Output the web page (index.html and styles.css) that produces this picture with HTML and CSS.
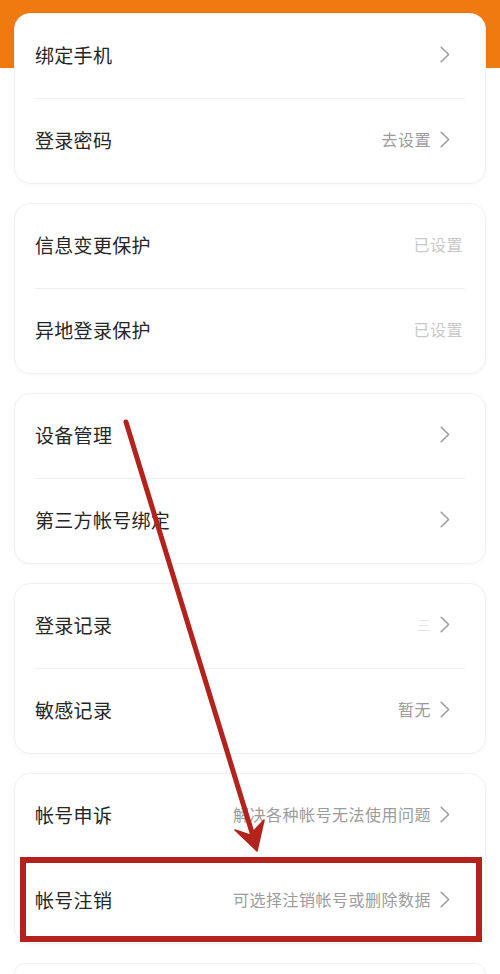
FILE: index.html
```html
<!DOCTYPE html>
<html lang="zh-CN">
<head>
<meta charset="utf-8">
<title>帐号与安全</title>
<link rel="stylesheet" href="styles.css">
</head>
<body>
<div class="page">
  <div class="list">
    <section class="card">
      <div class="row"><span class="label">绑定手机</span><span class="right"><svg class="chev" viewBox="0 0 10 17"><path d="M1.2 1.2 L8.6 8.5 L1.2 15.8"/></svg></span></div>
      <div class="sep"></div>
      <div class="row"><span class="label">登录密码</span><span class="right"><span class="value">去设置</span><svg class="chev" viewBox="0 0 10 17"><path d="M1.2 1.2 L8.6 8.5 L1.2 15.8"/></svg></span></div>
    </section>
    <section class="card">
      <div class="row nochev"><span class="label">信息变更保护</span><span class="right"><span class="value light">已设置</span></span></div>
      <div class="sep"></div>
      <div class="row nochev"><span class="label">异地登录保护</span><span class="right"><span class="value light">已设置</span></span></div>
    </section>
    <section class="card">
      <div class="row"><span class="label">设备管理</span><span class="right"><svg class="chev" viewBox="0 0 10 17"><path d="M1.2 1.2 L8.6 8.5 L1.2 15.8"/></svg></span></div>
      <div class="sep"></div>
      <div class="row"><span class="label">第三方帐号绑定</span><span class="right"><svg class="chev" viewBox="0 0 10 17"><path d="M1.2 1.2 L8.6 8.5 L1.2 15.8"/></svg></span></div>
    </section>
    <section class="card">
      <div class="row"><span class="label">登录记录</span><span class="right"><span class="value faint">三</span><svg class="chev" viewBox="0 0 10 17"><path d="M1.2 1.2 L8.6 8.5 L1.2 15.8"/></svg></span></div>
      <div class="sep"></div>
      <div class="row"><span class="label">敏感记录</span><span class="right"><span class="value">暂无</span><svg class="chev" viewBox="0 0 10 17"><path d="M1.2 1.2 L8.6 8.5 L1.2 15.8"/></svg></span></div>
    </section>
    <section class="card">
      <div class="row"><span class="label">帐号申诉</span><span class="right"><span class="value">解决各种帐号无法使用问题</span><svg class="chev" viewBox="0 0 10 17"><path d="M1.2 1.2 L8.6 8.5 L1.2 15.8"/></svg></span></div>
      <div class="sep"></div>
      <div class="row"><span class="label">帐号注销</span><span class="right"><span class="value">可选择注销帐号或删除数据</span><svg class="chev" viewBox="0 0 10 17"><path d="M1.2 1.2 L8.6 8.5 L1.2 15.8"/></svg></span></div>
    </section>
    <section class="card last">
      <div class="row"></div>
    </section>
  </div>
  <svg class="annot" viewBox="0 0 500 974" width="500" height="974">
    <line x1="126" y1="422" x2="253" y2="836" class="arrow-line"/>
    <polygon points="257,851 235,830 250,835 264,820" class="arrow-head"/>
    <rect x="23" y="860" width="456" height="79" class="box"/>
  </svg>
</div>
</body>
</html>
```
FILE: styles.css
```css
html, body {
  margin: 0;
  padding: 0;
  background: #ffffff;
}
body {
  font-family: "Noto Sans CJK SC", "Noto Sans", sans-serif;
  width: 500px;
  height: 974px;
  overflow: hidden;
}
.page {
  position: relative;
  width: 500px;
  height: 974px;
  overflow: hidden;
  background: linear-gradient(#ef7b10 0, #ef7b10 68px, #ffffff 68px);
}
.list {
  display: flex;
  flex-direction: column;
  gap: 19px;
  padding: 13px 14px 0;
}
.card {
  background: #ffffff;
  border-radius: 16px;
  border: 1px solid #f1f1f1;
  box-shadow: 0 1px 4px rgba(0, 0, 0, 0.03);
  display: flex;
  flex-direction: column;
}
.card.last {
  max-height: 20px;
  overflow: hidden;
}
.row {
  height: 80px;
  display: flex;
  align-items: center;
  justify-content: space-between;
  padding: 0 35px 4px 20px;
}
.row.nochev {
  padding-right: 22px;
}
.label {
  font-size: 19px;
  color: #262626;
  letter-spacing: 0.3px;
}
.right {
  display: flex;
  align-items: center;
  gap: 9px;
}
.value {
  font-size: 16px;
  color: #9c9c9c;
  letter-spacing: 0.5px;
}
.value.light {
  color: #c9c9c9;
}
.value.faint {
  color: #e6e6e6;
  font-size: 14px;
}
.chev {
  width: 10px;
  height: 17px;
  fill: none;
  stroke: #9a9a9a;
  stroke-width: 1.5;
  stroke-linecap: round;
  stroke-linejoin: round;
}
.sep {
  height: 1px;
  background: #f0f0f0;
  margin: 0 20px;
}
.annot {
  position: absolute;
  left: 0;
  top: 0;
  pointer-events: none;
}
.arrow-line {
  stroke: #b3221b;
  stroke-width: 5;
  stroke-linecap: round;
}
.arrow-head {
  fill: #b3221b;
  stroke: #b3221b;
  stroke-width: 1.5;
  stroke-linejoin: round;
}
.box {
  fill: none;
  stroke: #b3221b;
  stroke-width: 6;
}
```
